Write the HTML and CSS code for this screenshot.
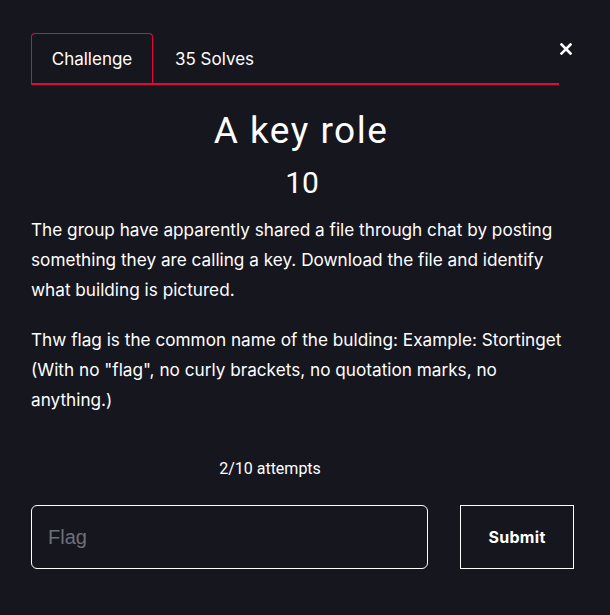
FILE: index.html
```html
<!DOCTYPE html>
<html>
<head>
<meta charset="utf-8">
<link rel="stylesheet" href="styles.css">
</head>
<body>
<div class="modal">
  <button class="close" aria-label="Close">
    <svg width="12" height="12" viewBox="0 0 12 12"><path d="M1.5 1.5 L10.5 10.5 M10.5 1.5 L1.5 10.5" stroke="#fff" stroke-width="2.6" stroke-linecap="square"/></svg>
  </button>
  <nav class="tabs">
    <div class="tab active">Challenge</div>
    <div class="tab">35 Solves</div>
  </nav>
  <h1 class="title">A key role</h1>
  <div class="value">10</div>
  <div class="desc">
    <p>The group have apparently shared a file through chat by posting something they are calling a key. Download the file and identify what building is pictured.</p>
    <p>Thw flag is the common name of the bulding: Example: Stortinget (With no "flag", no curly brackets, no quotation marks, no anything.)</p>
  </div>
  <div class="attempts">2/10 attempts</div>
  <form class="flag-row">
    <input class="flag-input" type="text" placeholder="Flag">
    <button class="submit" type="button">Submit</button>
  </form>
</div>
</body>
</html>
```
FILE: styles.css
```css
html, body {
  margin: 0;
  padding: 0;
  background: #16161f;
  color: #ffffff;
  font-family: Inter, Roboto, "Noto Sans", sans-serif;
}
.modal {
  position: relative;
  width: 528px;
  padding: 33px 0 0 31px;
}
.close {
  position: absolute;
  left: 560px;
  top: 43px;
  width: 12px;
  height: 12px;
  padding: 0;
  border: 0;
  background: none;
  display: block;
}
.close svg { display: block; }
.tabs {
  display: flex;
  border-bottom: 2px solid #e8063f;
  height: 50px;
}
.tab {
  font-size: 17px;
  padding: 0 21px;
  display: flex;
  align-items: center;
  height: 50px;
  box-sizing: border-box;
  border: 1px solid transparent;
  border-bottom: 0;
  border-radius: 4px 4px 0 0;
  margin-bottom: -1px;
}
.tab.active {
  border-color: #e8063f;
  width: 122px;
  padding: 0;
  justify-content: center;
}
.title {
  margin: 22px 0 0;
  padding-left: 12px;
  text-align: center;
  font-family: Roboto, sans-serif;
  font-size: 37px;
  font-weight: 400;
  letter-spacing: 1.5px;
  line-height: 48px;
}
.value {
  text-align: center;
  padding-left: 14px;
  font-family: Roboto, sans-serif;
  font-size: 30px;
  line-height: 40px;
  margin-top: 8px;
}
.desc {
  margin-top: 12px;
  width: 540px;
  font-size: 17.2px;
  line-height: 30px;
}
.desc p { margin: 0 0 20px; }
.attempts {
  text-align: center;
  padding-right: 50px;
  font-family: Roboto, sans-serif;
  font-size: 16px;
  margin-top: 42px;
  line-height: 24px;
}
.flag-row {
  display: flex;
  gap: 32px;
  margin-top: 24px;
  width: 543px;
}
.flag-input {
  width: 397px;
  height: 64px;
  box-sizing: border-box;
  border: 1px solid #ffffff;
  border-radius: 6px;
  background: transparent;
  color: #fff;
  font-family: "Liberation Sans", Arial, sans-serif;
  font-size: 20px;
  padding: 0 16px;
}
.flag-input::placeholder { color: #6c7079; }
.submit {
  width: 114px;
  height: 64px;
  box-sizing: border-box;
  border: 1px solid #ffffff;
  border-radius: 0;
  background: transparent;
  color: #fff;
  font-family: Inter, Roboto, sans-serif;
  font-weight: 700;
  font-size: 16px;
  letter-spacing: 0.3px;
}
```
